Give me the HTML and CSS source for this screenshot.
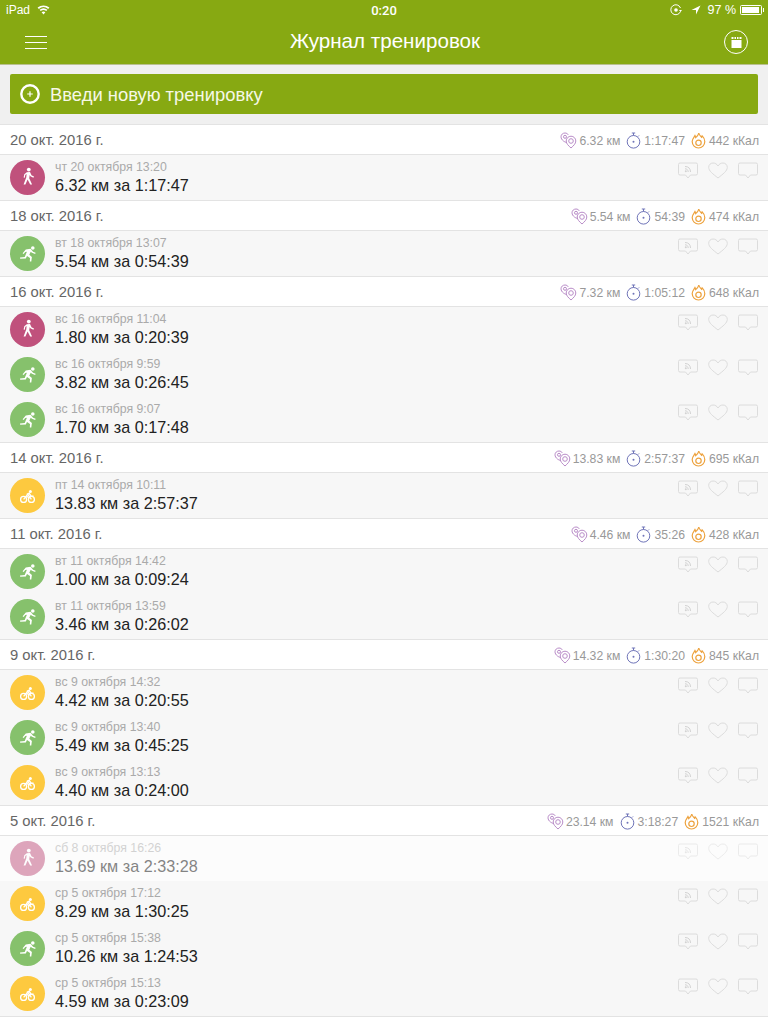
FILE: index.html
```html
<!DOCTYPE html>
<html lang="ru">
<head>
<meta charset="utf-8">
<title>Журнал тренировок</title>
<link rel="stylesheet" href="styles.css">
</head>
<body>
<svg class="defs" width="0" height="0" aria-hidden="true">
  <symbol id="walk" viewBox="0 0 35 35">
    <circle cx="18.800" cy="9.600" r="1.900" fill="#fff"/>
    <path d="M16.800 12.200l3.200-.2 1.500 3.300 2.500 1.300-.6 1.100-3-1.400-.7-1.200-.5 3.200 2.900 6.200h-1.900l-2.600-5-2.200 5h-1.800l2.700-7.200.3-3.200-1.300 1-.5 2.700-1.200-.2.700-3.400z" fill="#fff"/>
  </symbol>
  <symbol id="run" viewBox="0 0 35 35">
    <circle cx="22.800" cy="12" r="1.800" fill="#fff"/>
    <path d="M15.800 13.600l4.700-.8 2.600 3 2.500 1-.4 1.100-3.200-1.100-1.300-1-1.400 2.900 2.600 2.300-.6 4.600h-1.500l.2-3.700-3-1.800-1.200 2.500-5.600.2-.2-1.300 4.700-.4 2.200-5.400-1.700.3-1.500 2-1.100-.7z" fill="#fff"/>
  </symbol>
  <symbol id="bike" viewBox="0 0 35 35">
    <g fill="none" stroke="#fff" stroke-width="1.300">
      <circle cx="13.600" cy="21.400" r="3"/>
      <circle cx="21.400" cy="21.400" r="3"/>
      <path d="M13.600 21.400l4.200-5 3.600 5M16 17.400l3.200 3"/>
    </g>
    <circle cx="20.400" cy="13.400" r="1.500" fill="#fff"/>
    <path d="M15.800 16.200l3.600-2 2 3.200h2.200v1h-2.900l-1.700-2z" fill="#fff"/>
  </symbol>
  <symbol id="pin" viewBox="0 0 17 17">
    <g fill="none" stroke="#b98cc8" stroke-width="1">
      <path d="M7 10.500C5 10.500 1 8 1 4.800 1 2.600 2.800 1 5 1c1.500 0 2.700.8 3.300 1.900"/>
      <path d="M11 16c-2.500-2.300-4.800-4.300-4.800-7a4.800 4.800 0 0 1 9.600 0c0 2.700-2.300 4.700-4.800 7z"/>
      <circle cx="11" cy="9" r="2.300"/>
      <circle cx="5" cy="4.800" r="1.500"/>
    </g>
  </symbol>
  <symbol id="timer" viewBox="0 0 15 17">
    <g fill="none" stroke="#6f74b8" stroke-width="1">
      <circle cx="7.500" cy="9.800" r="6.300"/>
      <path d="M5.800 1h3.400M7.500 1v2.500M12 4.500l1-1"/>
    </g>
    <circle cx="7.500" cy="9.800" r="1" fill="#6f74b8"/>
  </symbol>
  <symbol id="flame" viewBox="0 0 15 17">
    <g fill="none" stroke="#eda23d" stroke-width="1.200">
      <path d="M7.800 1c.5 2.500 2 3 2.700 4.300.4-.4.600-.8.700-1.400 1.600 1.600 2.600 3.500 2.600 5.600 0 3.500-2.800 6.500-6.300 6.500S1.200 13 1.200 9.500C1.200 6.500 3 5.800 4 3.600c.4.800.6 1.300.7 2C6 4.500 7.400 3 7.800 1z"/>
      <circle cx="7.500" cy="10.800" r="2.700"/>
    </g>
  </symbol>
  <symbol id="rss" viewBox="0 0 20 17">
    <path d="M2 1h16a1.500 1.500 0 0 1 1.500 1.500v9A1.500 1.500 0 0 1 18 13h-5.500L10 16l-2.500-3H2A1.500 1.500 0 0 1 .5 11.500v-9A1.500 1.500 0 0 1 2 1z" fill="none" stroke="#dcdcdc"/>
    <path d="M7 4.500c3.500 0 5.500 2 5.500 5.500M7 6.800c2 0 3.200 1.200 3.200 3.200" fill="none" stroke="#d2d2d2"/>
    <circle cx="7.800" cy="9.300" r="1" fill="#d2d2d2"/>
  </symbol>
  <symbol id="heart" viewBox="0 0 20 17">
    <path d="M10 16C5 12 .7 9 .7 5.300.7 2.800 2.700 1 5 1c2.100 0 3.900 1 5 3 1.100-2 2.900-3 5-3 2.300 0 4.300 1.800 4.300 4.300C19.300 9 15 12 10 16z" fill="none" stroke="#dcdcdc"/>
  </symbol>
  <symbol id="bubble" viewBox="0 0 20 17">
    <path d="M2 1h16a1.500 1.500 0 0 1 1.500 1.500v9A1.500 1.500 0 0 1 18 13h-5.500L10 16l-2.500-3H2A1.500 1.500 0 0 1 .5 11.500v-9A1.500 1.500 0 0 1 2 1z" fill="none" stroke="#dcdcdc"/>
  </symbol>
</svg>

<header class="top">
  <div class="status">
    <div class="status-side">
      <span>iPad</span>
      <svg class="wifi" width="13" height="10" viewBox="0 0 13 10"><path d="M6.500 9.500L4.600 7.200a3 3 0 0 1 3.800 0zM3.700 6.100L2.600 4.800a6.200 6.200 0 0 1 7.800 0L9.300 6.100a4.500 4.500 0 0 0-5.600 0zM1.800 3.900L.6 2.500a9.300 9.300 0 0 1 11.800 0l-1.200 1.400a7.500 7.500 0 0 0-9.400 0z" fill="#fff"/></svg>
    </div>
    <div class="clock">0:20</div>
    <div class="status-side status-right">
      <svg width="12" height="12" viewBox="0 0 12 12"><path d="M10.500 7.500A5 5 0 1 1 10.500 4" fill="none" stroke="#fff"/><path d="M9 6h3l-1.500 2z" fill="#fff"/><circle cx="6" cy="6" r="1.800" fill="#fff"/></svg>
      <svg class="arrow" width="10" height="10" viewBox="0 0 10 10"><path d="M9.500.5L5 9.500V5H.5z" fill="#fff"/></svg>
      <span class="pct">97 %</span>
      <span class="battery"><span class="battery-fill"></span></span>
    </div>
  </div>
  <div class="nav">
    <div class="burger"><i></i><i></i><i></i></div>
    <h1 class="title">Журнал тренировок</h1>
    <div class="cal-btn">
      <svg width="11" height="11" viewBox="0 0 11 11"><path d="M.5 3h10v8H.5z" fill="#fff"/><path d="M.5 0h2v2h-2zM3.500 0h1.500v2H3.500zM6 0h1.500v2H6zM8.500 0h2v2h-2z" fill="#fff"/></svg>
    </div>
  </div>
</header>

<div class="add-wrap">
  <div class="add">
    <svg class="add-icon" width="20" height="20" viewBox="0 0 20 20"><circle cx="10" cy="10" r="8.700" fill="none" stroke="#fff" stroke-width="2.400"/><path d="M7.200 10h5.600M10 7.200v5.600" stroke="#fff" stroke-width="1.200"/></svg>
    <span class="add-text">Введи новую тренировку</span>
  </div>
</div>

<main class="log">

<section class="day">
  <div class="day-head"><span class="day-date">20 окт. 2016 г.</span>
    <div class="stats">
      <span class="stat"><svg class="ic-pin"><use href="#pin"/></svg>6.32 км</span>
      <span class="stat"><svg class="ic-sm"><use href="#timer"/></svg>1:17:47</span>
      <span class="stat"><svg class="ic-sm"><use href="#flame"/></svg>442 кКал</span>
    </div>
  </div>
  <div class="row">
    <span class="badge walk"><svg><use href="#walk"/></svg></span>
    <div class="info"><div class="when">чт 20 октября 13:20</div><div class="what">6.32 км за 1:17:47</div></div>
    <div class="acts"><svg><use href="#rss"/></svg><svg><use href="#heart"/></svg><svg><use href="#bubble"/></svg></div>
  </div>
</section>

<section class="day">
  <div class="day-head"><span class="day-date">18 окт. 2016 г.</span>
    <div class="stats">
      <span class="stat"><svg class="ic-pin"><use href="#pin"/></svg>5.54 км</span>
      <span class="stat"><svg class="ic-sm"><use href="#timer"/></svg>54:39</span>
      <span class="stat"><svg class="ic-sm"><use href="#flame"/></svg>474 кКал</span>
    </div>
  </div>
  <div class="row">
    <span class="badge run"><svg><use href="#run"/></svg></span>
    <div class="info"><div class="when">вт 18 октября 13:07</div><div class="what">5.54 км за 0:54:39</div></div>
    <div class="acts"><svg><use href="#rss"/></svg><svg><use href="#heart"/></svg><svg><use href="#bubble"/></svg></div>
  </div>
</section>

<section class="day">
  <div class="day-head"><span class="day-date">16 окт. 2016 г.</span>
    <div class="stats">
      <span class="stat"><svg class="ic-pin"><use href="#pin"/></svg>7.32 км</span>
      <span class="stat"><svg class="ic-sm"><use href="#timer"/></svg>1:05:12</span>
      <span class="stat"><svg class="ic-sm"><use href="#flame"/></svg>648 кКал</span>
    </div>
  </div>
  <div class="row">
    <span class="badge walk"><svg><use href="#walk"/></svg></span>
    <div class="info"><div class="when">вс 16 октября 11:04</div><div class="what">1.80 км за 0:20:39</div></div>
    <div class="acts"><svg><use href="#rss"/></svg><svg><use href="#heart"/></svg><svg><use href="#bubble"/></svg></div>
  </div>
  <div class="row">
    <span class="badge run"><svg><use href="#run"/></svg></span>
    <div class="info"><div class="when">вс 16 октября 9:59</div><div class="what">3.82 км за 0:26:45</div></div>
    <div class="acts"><svg><use href="#rss"/></svg><svg><use href="#heart"/></svg><svg><use href="#bubble"/></svg></div>
  </div>
  <div class="row">
    <span class="badge run"><svg><use href="#run"/></svg></span>
    <div class="info"><div class="when">вс 16 октября 9:07</div><div class="what">1.70 км за 0:17:48</div></div>
    <div class="acts"><svg><use href="#rss"/></svg><svg><use href="#heart"/></svg><svg><use href="#bubble"/></svg></div>
  </div>
</section>

<section class="day">
  <div class="day-head"><span class="day-date">14 окт. 2016 г.</span>
    <div class="stats">
      <span class="stat"><svg class="ic-pin"><use href="#pin"/></svg>13.83 км</span>
      <span class="stat"><svg class="ic-sm"><use href="#timer"/></svg>2:57:37</span>
      <span class="stat"><svg class="ic-sm"><use href="#flame"/></svg>695 кКал</span>
    </div>
  </div>
  <div class="row">
    <span class="badge bike"><svg><use href="#bike"/></svg></span>
    <div class="info"><div class="when">пт 14 октября 10:11</div><div class="what">13.83 км за 2:57:37</div></div>
    <div class="acts"><svg><use href="#rss"/></svg><svg><use href="#heart"/></svg><svg><use href="#bubble"/></svg></div>
  </div>
</section>

<section class="day">
  <div class="day-head"><span class="day-date">11 окт. 2016 г.</span>
    <div class="stats">
      <span class="stat"><svg class="ic-pin"><use href="#pin"/></svg>4.46 км</span>
      <span class="stat"><svg class="ic-sm"><use href="#timer"/></svg>35:26</span>
      <span class="stat"><svg class="ic-sm"><use href="#flame"/></svg>428 кКал</span>
    </div>
  </div>
  <div class="row">
    <span class="badge run"><svg><use href="#run"/></svg></span>
    <div class="info"><div class="when">вт 11 октября 14:42</div><div class="what">1.00 км за 0:09:24</div></div>
    <div class="acts"><svg><use href="#rss"/></svg><svg><use href="#heart"/></svg><svg><use href="#bubble"/></svg></div>
  </div>
  <div class="row">
    <span class="badge run"><svg><use href="#run"/></svg></span>
    <div class="info"><div class="when">вт 11 октября 13:59</div><div class="what">3.46 км за 0:26:02</div></div>
    <div class="acts"><svg><use href="#rss"/></svg><svg><use href="#heart"/></svg><svg><use href="#bubble"/></svg></div>
  </div>
</section>

<section class="day">
  <div class="day-head"><span class="day-date">9 окт. 2016 г.</span>
    <div class="stats">
      <span class="stat"><svg class="ic-pin"><use href="#pin"/></svg>14.32 км</span>
      <span class="stat"><svg class="ic-sm"><use href="#timer"/></svg>1:30:20</span>
      <span class="stat"><svg class="ic-sm"><use href="#flame"/></svg>845 кКал</span>
    </div>
  </div>
  <div class="row">
    <span class="badge bike"><svg><use href="#bike"/></svg></span>
    <div class="info"><div class="when">вс 9 октября 14:32</div><div class="what">4.42 км за 0:20:55</div></div>
    <div class="acts"><svg><use href="#rss"/></svg><svg><use href="#heart"/></svg><svg><use href="#bubble"/></svg></div>
  </div>
  <div class="row">
    <span class="badge run"><svg><use href="#run"/></svg></span>
    <div class="info"><div class="when">вс 9 октября 13:40</div><div class="what">5.49 км за 0:45:25</div></div>
    <div class="acts"><svg><use href="#rss"/></svg><svg><use href="#heart"/></svg><svg><use href="#bubble"/></svg></div>
  </div>
  <div class="row">
    <span class="badge bike"><svg><use href="#bike"/></svg></span>
    <div class="info"><div class="when">вс 9 октября 13:13</div><div class="what">4.40 км за 0:24:00</div></div>
    <div class="acts"><svg><use href="#rss"/></svg><svg><use href="#heart"/></svg><svg><use href="#bubble"/></svg></div>
  </div>
</section>

<section class="day">
  <div class="day-head"><span class="day-date">5 окт. 2016 г.</span>
    <div class="stats">
      <span class="stat"><svg class="ic-pin"><use href="#pin"/></svg>23.14 км</span>
      <span class="stat"><svg class="ic-sm"><use href="#timer"/></svg>3:18:27</span>
      <span class="stat"><svg class="ic-sm"><use href="#flame"/></svg>1521 кКал</span>
    </div>
  </div>
  <div class="row row-fading">
    <span class="badge walk"><svg><use href="#walk"/></svg></span>
    <div class="info"><div class="when">сб 8 октября 16:26</div><div class="what">13.69 км за 2:33:28</div></div>
    <div class="acts"><svg><use href="#rss"/></svg><svg><use href="#heart"/></svg><svg><use href="#bubble"/></svg></div>
  </div>
  <div class="row">
    <span class="badge bike"><svg><use href="#bike"/></svg></span>
    <div class="info"><div class="when">ср 5 октября 17:12</div><div class="what">8.29 км за 1:30:25</div></div>
    <div class="acts"><svg><use href="#rss"/></svg><svg><use href="#heart"/></svg><svg><use href="#bubble"/></svg></div>
  </div>
  <div class="row">
    <span class="badge run"><svg><use href="#run"/></svg></span>
    <div class="info"><div class="when">ср 5 октября 15:38</div><div class="what">10.26 км за 1:24:53</div></div>
    <div class="acts"><svg><use href="#rss"/></svg><svg><use href="#heart"/></svg><svg><use href="#bubble"/></svg></div>
  </div>
  <div class="row">
    <span class="badge bike"><svg><use href="#bike"/></svg></span>
    <div class="info"><div class="when">ср 5 октября 15:13</div><div class="what">4.59 км за 0:23:09</div></div>
    <div class="acts"><svg><use href="#rss"/></svg><svg><use href="#heart"/></svg><svg><use href="#bubble"/></svg></div>
  </div>
</section>

</main>
</body>
</html>
```

FILE: styles.css
```css
* { box-sizing: border-box; }
html, body { margin: 0; padding: 0; }
body {
  width: 768px;
  height: 1024px;
  overflow: hidden;
  background: #fff;
  font-family: "Liberation Sans", Arial, sans-serif;
  color: #222;
}
.defs { position: absolute; }

.top {
  height: 65px;
  background: #87a912;
  border-bottom: 1px solid #b9c08f;
  color: #fff;
}
.status {
  height: 20px;
  padding: 0 6px;
  display: grid;
  grid-template-columns: 1fr auto 1fr;
  align-items: center;
  font-size: 12px;
}
.status-side { display: flex; align-items: center; gap: 6px; }
.status-right { justify-content: flex-end; gap: 0; }
.clock { font-family: Roboto, "Liberation Sans", sans-serif; font-size: 13px; font-weight: 500; }
.wifi { margin-left: 1px; }
.arrow { margin-left: 9px; }
.pct { margin: 0 4px 0 7px; font-size: 12.5px; }
.battery {
  width: 22px;
  height: 10px;
  border: 1px solid #fff;
  padding: 1px;
  border-radius: 1.5px;
  display: block;
  position: relative;
}
.battery::after {
  content: "";
  position: absolute;
  right: -3px;
  top: 2px;
  width: 1.5px;
  height: 4px;
  background: #fff;
}
.battery-fill { display: block; height: 100%; width: 94%; background: #fff; }

.nav {
  height: 44px;
  padding: 0 20px 0 25px;
  display: grid;
  grid-template-columns: 1fr auto 1fr;
  align-items: center;
}
.burger { width: 22px; display: flex; flex-direction: column; gap: 5px; }
.burger i { display: block; height: 1px; background: #fff; }
.title {
  margin: 0 0 0 -3px;
  padding-bottom: 2px;
  font-size: 20.6px;
  font-weight: normal;
  color: #fff;
}
.cal-btn {
  width: 24px;
  height: 24px;
  border: 1px solid #fff;
  border-radius: 50%;
  display: flex;
  align-items: center;
  justify-content: center;
  justify-self: end;
}

.add-wrap {
  background: #f0f0f0;
  height: 60px;
  padding: 9px 10px 10px;
  border-bottom: 1px solid #e3e3e3;
}
.add {
  height: 40px;
  background: #87a912;
  border-radius: 2px;
  display: flex;
  align-items: center;
  gap: 10px;
  padding: 0 0 0 10px;
  color: #f6f8e6;
  font-size: 18.4px;
}
.add-icon { flex: none; }
.add-text { padding-top: 2px; }

.day-head {
  height: 30px;
  background: #fff;
  border-bottom: 1px solid #e3e3e3;
  padding: 0 9px 0 10px;
  display: flex;
  align-items: center;
  justify-content: space-between;
}
.day-date { font-size: 14.8px; color: #666; }
.stats { display: flex; gap: 6px; font-size: 12.2px; color: #999; padding-top: 2px; }
.stat { display: flex; align-items: center; gap: 3px; }
.ic-pin { width: 17px; height: 17px; margin-right: -1px; }
.ic-sm { width: 15px; height: 17px; }

.row {
  height: 45px;
  background: #f7f7f7;
  padding: 5px 10px 0;
  display: flex;
}
.day > .row:last-child { height: 46px; border-bottom: 1px solid #e3e3e3; }
.badge {
  width: 35px;
  height: 35px;
  border-radius: 50%;
  flex: none;
  margin-right: 10px;
}
.badge svg { display: block; width: 35px; height: 35px; }
.walk { background: #c0517c; }
.run { background: #86c16c; }
.bike { background: #fdc93f; }
.info { flex: 1; }
.when { font-size: 12.3px; line-height: 14px; color: #aaa; }
.what { font-size: 16.2px; line-height: 18px; color: #222; margin-top: 2px; }
.acts { display: flex; gap: 10px; align-items: flex-start; margin-top: 2px; }
.acts svg { width: 20px; height: 17px; display: block; }
.row-fading { background: #fcfcfc; }
.row-fading .badge { opacity: 0.5; }
.row-fading .when { opacity: 0.5; }
.row-fading .what { opacity: 0.55; }
.row-fading .acts { opacity: 0.5; }
```
